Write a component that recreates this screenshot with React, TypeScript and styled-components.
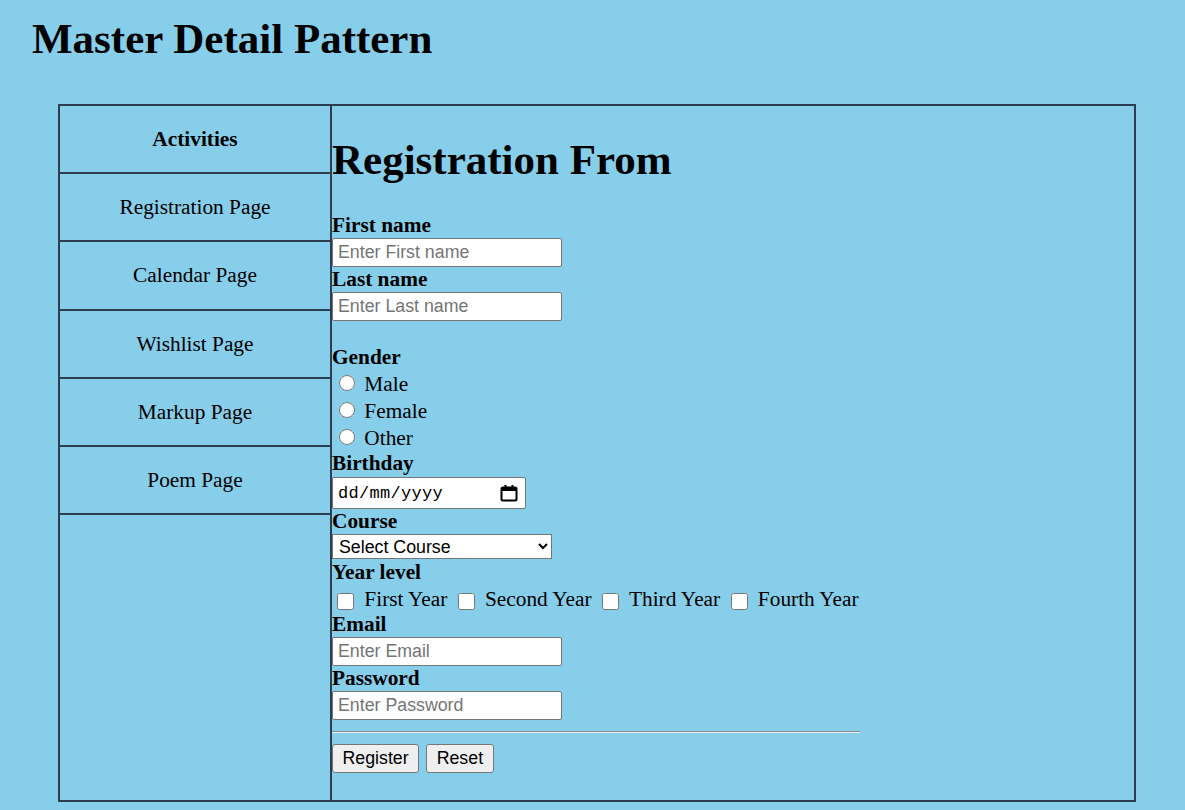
import styled, { createGlobalStyle } from "styled-components";

const GlobalStyle = createGlobalStyle`
  body {
    margin: 0;
    background: #87ceeb;
    font-family: "Liberation Serif", "Times New Roman", serif;
    color: #000;
  }
`;

const pages = [
  "Registration Page",
  "Calendar Page",
  "Wishlist Page",
  "Markup Page",
  "Poem Page",
];

const years = ["First Year", "Second Year", "Third Year", "Fourth Year"];

const CalendarIcon = () => (
  <svg width="18" height="18" viewBox="0 0 18 18" fill="none">
    <rect x="1.5" y="3.5" width="15" height="13" rx="1.5" stroke="#000" strokeWidth="2" />
    <rect x="1.5" y="3.5" width="15" height="3.5" fill="#000" />
    <rect x="4.5" y="1" width="2" height="3" fill="#000" />
    <rect x="11.5" y="1" width="2" height="3" fill="#000" />
  </svg>
);

const App = () => {
  return (
    <>
      <GlobalStyle />
      <Title>Master Detail Pattern</Title>
      <Frame>
        <Sidebar>
          <NavItem $heading>Activities</NavItem>
          {pages.map((p) => (
            <NavItem key={p}>{p}</NavItem>
          ))}
        </Sidebar>
        <Detail>
          <FormTitle>Registration From</FormTitle>
          <FieldLabel>First name</FieldLabel>
          <TextInput type="text" placeholder="Enter First name" />
          <FieldLabel>Last name</FieldLabel>
          <TextInput type="text" placeholder="Enter Last name" />

          <FieldLabel $top={25}>Gender</FieldLabel>
          {["Male", "Female", "Other"].map((g) => (
            <OptionRow key={g}>
              <Radio type="radio" name="gender" /> {g}
            </OptionRow>
          ))}

          <FieldLabel $top={2}>Birthday</FieldLabel>
          <DateBox>
            <DateText>dd/mm/yyyy</DateText>
            <CalendarIcon />
          </DateBox>

          <FieldLabel $top={1}>Course</FieldLabel>
          <CourseSelect defaultValue="">
            <option value="">Select Course</option>
            <option>BSIT</option>
            <option>BSCS</option>
          </CourseSelect>

          <FieldLabel $top={2}>Year level</FieldLabel>
          <YearRow>
            {years.map((y) => (
              <span key={y}>
                <Check type="checkbox" /> {y}{" "}
              </span>
            ))}
          </YearRow>

          <FieldLabel $top={1}>Email</FieldLabel>
          <TextInput type="email" placeholder="Enter Email" />
          <FieldLabel>Password</FieldLabel>
          <TextInput type="password" placeholder="Enter Password" />

          <Divider />
          <Actions>
            <Button type="button">Register</Button>
            <Button type="reset">Reset</Button>
          </Actions>
        </Detail>
      </Frame>
    </>
  );
};

export default App;

const Title = styled.h1`
  margin: 0;
  padding: 16px 0 0 32px;
  font-size: 43px;
  line-height: 46px;
  font-weight: bold;
`;

const Frame = styled.div`
  display: flex;
  box-sizing: border-box;
  width: 1078px;
  height: 698px;
  margin: 42px 0 0 58px;
  border: 2px solid #2c3e50;
`;

const Sidebar = styled.nav`
  width: 270px;
  flex-shrink: 0;
  display: flex;
  flex-direction: column;
`;

const NavItem = styled.div<{ $heading?: boolean }>`
  height: 66.2px;
  flex-shrink: 0;
  display: flex;
  align-items: center;
  justify-content: center;
  border-bottom: 2px solid #2c3e50;
  font-size: 21.33px;
  line-height: 24px;
  font-weight: ${(p) => (p.$heading ? "bold" : "normal")};
`;

const Detail = styled.form`
  flex: 1;
  border-left: 2px solid #2c3e50;
`;

const FormTitle = styled.h1`
  margin: 30.6px 0 31.7px;
  font-size: 43px;
  line-height: 46px;
  font-weight: bold;
`;

const FieldLabel = styled.label<{ $top?: number }>`
  display: block;
  margin-top: ${(p) => p.$top ?? 0}px;
  font-size: 21.33px;
  line-height: 23px;
  font-weight: bold;
`;

const TextInput = styled.input`
  display: block;
  box-sizing: border-box;
  width: 230px;
  height: 29px;
  margin: 1px 0;
  padding: 1px 5px;
  border: 1px solid #767676;
  border-radius: 2px;
  background: #fff;
  font-family: "Liberation Sans", Arial, sans-serif;
  font-size: 17.78px;
  &::placeholder {
    color: #757575;
  }
`;

const OptionRow = styled.label`
  display: block;
  box-sizing: border-box;
  height: 27px;
  padding-top: 4px;
  font-size: 21.33px;
  line-height: 23px;
`;

const Radio = styled.input`
  width: 16px;
  height: 16px;
  margin: 0 4px 0 7px;
  vertical-align: baseline;
`;

const DateBox = styled.div`
  display: flex;
  align-items: center;
  justify-content: space-between;
  box-sizing: border-box;
  width: 194px;
  height: 32px;
  margin-top: 2px;
  padding: 0 7px 0 5px;
  background: #fff;
  border: 1px solid #767676;
  border-radius: 2px;
`;

const DateText = styled.span`
  font-family: "Liberation Mono", "DejaVu Sans Mono", monospace;
  font-size: 17px;
  letter-spacing: 0.3px;
`;

const CourseSelect = styled.select`
  display: block;
  box-sizing: border-box;
  width: 220px;
  height: 25px;
  margin-top: 1px;
  padding: 0 2px;
  background: #fff;
  border: 1px solid #767676;
  border-radius: 0;
  font-family: "Liberation Sans", Arial, sans-serif;
  font-size: 17.78px;
  color: #000;
`;

const YearRow = styled.div`
  box-sizing: border-box;
  height: 28px;
  padding-top: 4px;
  font-size: 21.33px;
  line-height: 23px;
  white-space: nowrap;
`;

const Check = styled.input`
  width: 17px;
  height: 17px;
  margin: 0 5px 0 5px;
  vertical-align: -4px;
`;

const Divider = styled.hr`
  width: 528px;
  margin: 11px 0;
  border: 0;
  border-top: 1px solid #8a8a8a;
  border-bottom: 1px solid #e8f4f8;
`;

const Actions = styled.div`
  display: flex;
  gap: 7px;
  margin-top: 1px;
`;

const Button = styled.button`
  box-sizing: border-box;
  height: 29px;
  padding: 0 9.5px;
  background: #efefef;
  border: 1px solid #767676;
  border-radius: 3px;
  font-family: "Liberation Sans", Arial, sans-serif;
  font-size: 17.78px;
  color: #000;
`;
